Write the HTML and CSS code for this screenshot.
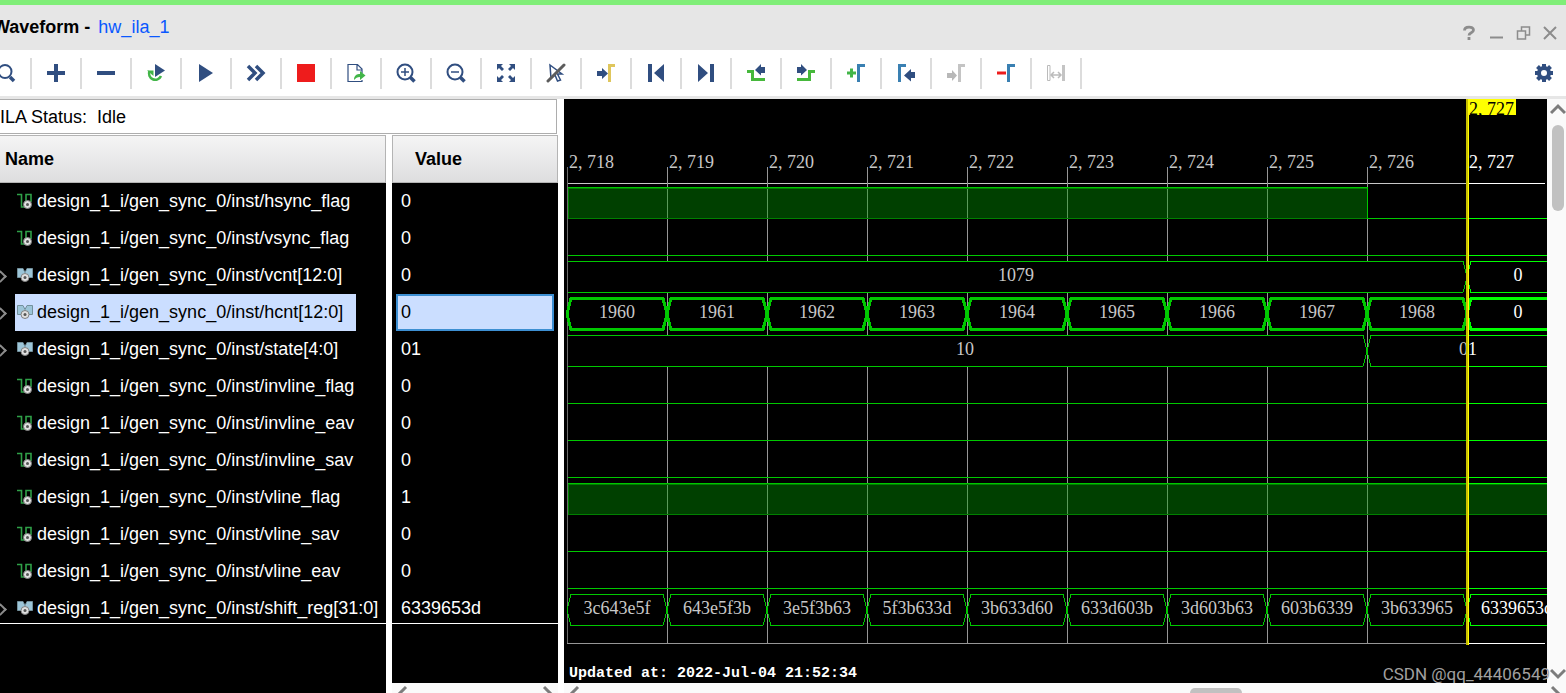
FILE: index.html
```html
<!DOCTYPE html>
<html lang="en">
<head>
<meta charset="utf-8">
<title>Waveform - hw_ila_1</title>
<link rel="stylesheet" href="styles.css">
</head>
<body>
<svg class="defs" aria-hidden="true">
  <symbol id="bit" viewBox="0 0 16 16"><path d="M0 1.500h4.500V14H9V1.500h5V9" fill="none" stroke="#2fa048" stroke-width="1.600"/><circle cx="10.500" cy="11.500" r="4" fill="#e0e0e0" stroke="#808080"/><circle cx="10.500" cy="11.500" r="1.500" fill="#555"/></symbol>
  <symbol id="bus" viewBox="0 0 16 16"><path d="M.5 1.500H6l2 4 2-4h5.500v9H12L8 8l-4 2.500H.5z" fill="#9cc5d8" stroke="#73909c"/><circle cx="8" cy="10.500" r="4" fill="#e0e0e0" stroke="#808080"/><circle cx="8" cy="10.500" r="1.500" fill="#555"/></symbol>
  <symbol id="hex" viewBox="0 0 100 34" overflow="visible"><path d="M0 16L4 .5H96L100 16L96 31.500H4Z"/></symbol>
</svg>

<header class="titlebar">
  <h1 class="title">Waveform - <a href="#">hw_ila_1</a></h1>
  <div class="window-buttons">
    <button aria-label="Help"><svg viewBox="0 0 16 16"><path d="M3.500 5.500C3.500 1 12.500 1 12.500 5c0 3-4.500 2.500-4.500 5.500M8 12v3" stroke-width="2.800"/></svg></button>
    <button aria-label="Minimize"><svg viewBox="0 0 16 16"><path d="M2 12.500h13" stroke-width="2"/></svg></button>
    <button aria-label="Restore"><svg viewBox="0 0 16 16"><path d="M6.500 6V2h8v8H10M2.500 6h8v8h-8z" stroke-width="1.500"/></svg></button>
    <button aria-label="Close"><svg viewBox="0 0 16 16"><path d="M2 2l12 12M14 2L2 14" stroke-width="2"/></svg></button>
  </div>
</header>

<nav class="toolbar">
  <div class="tools">
    <button aria-label="Search"><svg viewBox="0 0 20 20"><circle cx="9" cy="8.500" r="6.500" fill="none" stroke="#304e80" stroke-width="2"/><path d="M14 14l4 4" stroke="#304e80" stroke-width="3.500"/></svg></button>
    <button aria-label="Add"><svg viewBox="0 0 20 20"><path d="M10 1v18M1 10h18" stroke="#304e80" stroke-width="4"/></svg></button>
    <button aria-label="Remove"><svg viewBox="0 0 20 20"><path d="M1 10h18" stroke="#304e80" stroke-width="4"/></svg></button>
    <button aria-label="Run trigger continuously"><svg viewBox="0 0 20 20"><path d="M3.500 8A6 6 0 1 0 15 13" fill="none" stroke="#42b548" stroke-width="2.500"/><path d="M1 7.500h6.500V13z" fill="#42b548"/><path d="M9 1l10 6.500L9 14z" fill="#304e80"/></svg></button>
    <button aria-label="Run trigger"><svg viewBox="0 0 20 20"><path d="M3 1l14 9-14 9z" fill="#304e80"/></svg></button>
    <button aria-label="Run immediate"><svg viewBox="0 0 20 20"><path d="M2 3l7 7-7 7M10 3l7 7-7 7" fill="none" stroke="#304e80" stroke-width="3.500"/></svg></button>
    <button aria-label="Stop"><svg viewBox="0 0 20 20"><path d="M1 1h18v18H1z" fill="#ee1c1c"/></svg></button>
    <button aria-label="Export"><svg viewBox="0 0 20 20"><path d="M16 10V6l-4.500-4.500H2v17h14V17M11 2v5h5" fill="none" stroke="#304e80" stroke-width="1.200"/><path d="M8 17c0-5 3-6 6-6V8l5.500 4.500L14 17v-3c-3 0-4 1-6 3z" fill="#42b548"/></svg></button>
    <button aria-label="Zoom in"><svg viewBox="0 0 20 20"><circle cx="9" cy="9" r="7.500" fill="none" stroke="#304e80" stroke-width="2"/><path d="M5 9h8M9 5v8" stroke="#304e80" stroke-width="1.500"/><path d="M14.500 14.500l4 4" stroke="#304e80" stroke-width="3.500"/></svg></button>
    <button aria-label="Zoom out"><svg viewBox="0 0 20 20"><circle cx="9" cy="9" r="7.500" fill="none" stroke="#304e80" stroke-width="2"/><path d="M5 9h8" stroke="#304e80" stroke-width="1.500"/><path d="M14.500 14.500l4 4" stroke="#304e80" stroke-width="3.500"/></svg></button>
    <button aria-label="Zoom fit"><svg viewBox="0 0 20 20"><path d="M1 1h6L5 3l3 3-2 2-3-3-2 2zM19 1v6l-2-2-3 3-2-2 3-3-2-2zM1 19v-6l2 2 3-3 2 2-3 3 2 2zM19 19h-6l2-2-3-3 2-2 3 3 2-2z" fill="#304e80"/></svg></button>
    <button aria-label="Cursor off"><svg viewBox="0 0 20 20"><path d="M4 2l12 9h-4.500l3 6-3 1-2.500-6-4 3.500z" fill="#fff" stroke="#304e80" stroke-width="1.500"/><path d="M2 18L18 2" stroke="#5c5c5c" stroke-width="3" stroke-linecap="round"/></svg></button>
    <button aria-label="Go to cursor"><svg viewBox="0 0 20 20"><path d="M1 8h5V5l6 5.500L6 16v-3H1z" fill="#304e80"/><path d="M13.500 19V2.500H19" fill="none" stroke="#dfc65c" stroke-width="3"/></svg></button>
    <button aria-label="Go to start"><svg viewBox="0 0 20 20"><path d="M2 1h4v18H2zM18 1v18L8 10z" fill="#304e80"/></svg></button>
    <button aria-label="Go to end"><svg viewBox="0 0 20 20"><path d="M14 1h4v18h-4zM2 1v18l10-9z" fill="#304e80"/></svg></button>
    <button aria-label="Previous transition"><svg viewBox="0 0 20 20"><path d="M1 8.500h5.500v8H19" fill="none" stroke="#46b83c" stroke-width="3"/><path d="M19 4h-4V1L9 7l6 5.500V10h4z" fill="#304e80"/></svg></button>
    <button aria-label="Next transition"><svg viewBox="0 0 20 20"><path d="M1 16.500h12.500v-8H19" fill="none" stroke="#46b83c" stroke-width="3"/><path d="M1 4h4V1l6 6-6 5.500V10H1z" fill="#304e80"/></svg></button>
    <button aria-label="Add marker"><svg viewBox="0 0 20 20"><path d="M1 10h9M5.500 5.500v9" stroke="#42b548" stroke-width="3"/><path d="M12.500 19V2.500H19" fill="none" stroke="#3a80b2" stroke-width="3"/></svg></button>
    <button aria-label="Previous marker"><svg viewBox="0 0 20 20"><path d="M3.500 19V2.500H10" fill="none" stroke="#3a80b2" stroke-width="3"/><path d="M19 9h-4V6l-7 6.500 7 6V15h4z" fill="#304e80"/></svg></button>
    <button aria-label="Next marker" disabled><svg viewBox="0 0 20 20"><path d="M1 10h5V7l5 5.500L6 18v-3H1z" fill="#b8b8b8"/><path d="M13.500 19V2.500H19" fill="none" stroke="#c4c4c4" stroke-width="3"/></svg></button>
    <button aria-label="Delete marker"><svg viewBox="0 0 20 20"><path d="M1 10h9" stroke="#ee1c1c" stroke-width="3"/><path d="M12.500 19V2.500H19" fill="none" stroke="#3a80b2" stroke-width="3"/></svg></button>
    <button aria-label="Swap markers" disabled><svg viewBox="0 0 20 20"><path d="M4 2.500H1.500v15H4z" fill="none" stroke="#bbb"/><path d="M16 2h3v16h-3z" fill="#c4c4c4"/><path d="M5 12h10M8 9l-3 3 3 3M12 9l3 3-3 3" fill="none" stroke="#bbb" stroke-width="1.500"/></svg></button>
  </div>
  <button class="settings" aria-label="Settings"><svg viewBox="0 0 20 20"><circle cx="10" cy="10" r="5" fill="none" stroke="#304e80" stroke-width="4"/><path d="M10 1v3M10 16v3M1 10h3M16 10h3M3.500 3.500l2.500 2.500M14 14l2.500 2.500M3.500 16.500L6 14M14 6l2.500-2.500" stroke="#304e80" stroke-width="4"/></svg></button>
</nav>

<main class="workspace">
  <section class="signals">
    <div class="status">ILA Status:&nbsp; Idle</div>
    <div class="panes">
      <div class="pane name-pane">
        <table>
          <thead><tr><th>Name</th></tr></thead>
          <tbody>
            <tr><td><span class="signal"><svg><use href="#bit"/></svg>design_1_i/gen_sync_0/inst/hsync_flag</span></td></tr>
            <tr><td><span class="signal"><svg><use href="#bit"/></svg>design_1_i/gen_sync_0/inst/vsync_flag</span></td></tr>
            <tr class="group"><td><span class="signal"><svg><use href="#bus"/></svg>design_1_i/gen_sync_0/inst/vcnt[12:0]</span></td></tr>
            <tr class="group selected"><td><span class="signal"><svg><use href="#bus"/></svg>design_1_i/gen_sync_0/inst/hcnt[12:0]</span></td></tr>
            <tr class="group"><td><span class="signal"><svg><use href="#bus"/></svg>design_1_i/gen_sync_0/inst/state[4:0]</span></td></tr>
            <tr><td><span class="signal"><svg><use href="#bit"/></svg>design_1_i/gen_sync_0/inst/invline_flag</span></td></tr>
            <tr><td><span class="signal"><svg><use href="#bit"/></svg>design_1_i/gen_sync_0/inst/invline_eav</span></td></tr>
            <tr><td><span class="signal"><svg><use href="#bit"/></svg>design_1_i/gen_sync_0/inst/invline_sav</span></td></tr>
            <tr><td><span class="signal"><svg><use href="#bit"/></svg>design_1_i/gen_sync_0/inst/vline_flag</span></td></tr>
            <tr><td><span class="signal"><svg><use href="#bit"/></svg>design_1_i/gen_sync_0/inst/vline_sav</span></td></tr>
            <tr><td><span class="signal"><svg><use href="#bit"/></svg>design_1_i/gen_sync_0/inst/vline_eav</span></td></tr>
            <tr class="group last"><td><span class="signal"><svg><use href="#bus"/></svg>design_1_i/gen_sync_0/inst/shift_reg[31:0]</span></td></tr>
          </tbody>
        </table>
      </div>
      <div class="pane value-pane">
        <table>
          <thead><tr><th>Value</th></tr></thead>
          <tbody>
            <tr><td><span class="value">0</span></td></tr>
            <tr><td><span class="value">0</span></td></tr>
            <tr><td><span class="value">0</span></td></tr>
            <tr class="selected"><td><span class="value">0</span></td></tr>
            <tr><td><span class="value">01</span></td></tr>
            <tr><td><span class="value">0</span></td></tr>
            <tr><td><span class="value">0</span></td></tr>
            <tr><td><span class="value">0</span></td></tr>
            <tr><td><span class="value">1</span></td></tr>
            <tr><td><span class="value">0</span></td></tr>
            <tr><td><span class="value">0</span></td></tr>
            <tr class="last"><td><span class="value">6339653d</span></td></tr>
          </tbody>
        </table>
        <div class="hscroll">
          <svg class="arrow" viewBox="0 0 16 10"><path d="M14 2L4 12"/></svg>
          <svg class="arrow" viewBox="0 0 16 10"><path d="M2 2l10 10"/></svg>
        </div>
      </div>
    </div>
  </section>

  <section class="viewer">
    <div class="viewer-row">
      <svg class="wave" role="img" aria-label="Waveform">
        <!-- time grid -->
        <path class="axis" d="M3 84.500H903"/>
        <path class="grid" d="M103.500 68V544M203.500 68V544M303.500 68V544M403.500 68V544M503.500 68V544M603.500 68V544M703.500 68V544M803.500 68V544M3 544.500H903"/>
        <path class="grid dim" d="M3.500 68V544"/>
        <path class="axis now" d="M903 84.500H981M903 544.500H981"/>
        <g class="ticks">
          <text x="5" y="69">2, 718</text><text x="105" y="69">2, 719</text><text x="205" y="69">2, 720</text><text x="305" y="69">2, 721</text><text x="405" y="69">2, 722</text><text x="505" y="69">2, 723</text><text x="605" y="69">2, 724</text><text x="705" y="69">2, 725</text><text x="805" y="69">2, 726</text><text class="now" x="905" y="69">2, 727</text>
        </g>
        <!-- single-bit signals -->
        <rect class="high" x="4" y="88" width="799" height="31"/>
        <path class="edge" d="M4 119.500H803M4.500 88V119M4 89.500H803"/>
        <path class="line" d="M4 88.500H803.500V119.500H903M4 156.500H903M4 304.500H903M4 341.500H903M4 378.500H903M4 452.500H903M4 489.500H903"/>
        <path class="line now" d="M903 119.500H983M903 156.500H983M903 304.500H983M903 341.500H983M903 378.500H983M903 452.500H983M903 489.500H983"/>
        <rect class="high" x="4" y="384" width="979" height="31"/>
        <path class="edge" d="M4 415.500H983M4.500 384V415M4 385.500H983"/>
        <path class="line" d="M4 384.500H903"/><path class="line now" d="M903 384.500H983"/>
        <!-- buses -->
        <path class="bus" d="M4 162.500H899L903 178L899 193.500H4"/>
        <path class="bus now" d="M990 162.500H907L903 178L907 193.500H990"/>
        <path class="bus" d="M4 236.500H799L803 252L799 267.500H4"/>
        <path class="bus" d="M903 236.500H807L803 252L807 267.500H903"/>
        <path class="bus now" d="M903 236.500H983M903 267.500H983"/>
        <g class="bus thick">
          <use href="#hex" x="3" y="199" width="100" height="34"/><use href="#hex" x="103" y="199" width="100" height="34"/><use href="#hex" x="203" y="199" width="100" height="34"/><use href="#hex" x="303" y="199" width="100" height="34"/><use href="#hex" x="403" y="199" width="100" height="34"/><use href="#hex" x="503" y="199" width="100" height="34"/><use href="#hex" x="603" y="199" width="100" height="34"/><use href="#hex" x="703" y="199" width="100" height="34"/><use href="#hex" x="803" y="199" width="100" height="34"/>
          <use class="now" href="#hex" x="903" y="199" width="100" height="34"/>
        </g>
        <g class="bus">
          <use href="#hex" x="3" y="495" width="100" height="34"/><use href="#hex" x="103" y="495" width="100" height="34"/><use href="#hex" x="203" y="495" width="100" height="34"/><use href="#hex" x="303" y="495" width="100" height="34"/><use href="#hex" x="403" y="495" width="100" height="34"/><use href="#hex" x="503" y="495" width="100" height="34"/><use href="#hex" x="603" y="495" width="100" height="34"/><use href="#hex" x="703" y="495" width="100" height="34"/><use href="#hex" x="803" y="495" width="100" height="34"/>
          <use class="now" href="#hex" x="903" y="495" width="100" height="34"/>
        </g>
        <g class="values">
          <text x="452" y="182">1079</text><text class="now" x="954" y="182">0</text>
          <text x="53" y="219">1960</text><text x="153" y="219">1961</text><text x="253" y="219">1962</text><text x="353" y="219">1963</text><text x="453" y="219">1964</text><text x="553" y="219">1965</text><text x="653" y="219">1966</text><text x="753" y="219">1967</text><text x="853" y="219">1968</text><text class="now" x="954" y="219">0</text>
          <text x="401" y="256">10</text><text x="904" y="256">0<tspan class="now">1</tspan></text>
          <text x="53" y="515">3c643e5f</text><text x="153" y="515">643e5f3b</text><text x="253" y="515">3e5f3b63</text><text x="353" y="515">5f3b633d</text><text x="453" y="515">3b633d60</text><text x="553" y="515">633d603b</text><text x="653" y="515">3d603b63</text><text x="753" y="515">603b6339</text><text x="853" y="515">3b633965</text><text class="now" x="953" y="515">6339653d</text>
        </g>
        <!-- cursor -->
        <path d="M902 0h2v546h-2z" fill="#c8be00"/><path d="M904 0h1v546h-1z" fill="#ff0"/>
        <svg x="904" y="0" width="48" height="16"><rect width="48" height="16" fill="#ff0"/><text class="cursor-time" x="1" y="16">2, 727</text></svg>
        <text class="updated" x="5" y="578">Updated at: 2022-Jul-04 21:52:34</text>
      </svg>
      <div class="vscroll">
        <svg class="arrow" viewBox="0 0 16 12"><path d="M1 10l7-7 7 7"/></svg>
        <div class="vthumb"></div>
        <svg class="arrow" viewBox="0 0 16 12"><path d="M1 2l7 7 7-7"/></svg>
      </div>
    </div>
    <div class="hscroll">
      <svg class="arrow" viewBox="0 0 16 10"><path d="M14 2L4 12"/></svg>
      <div class="hthumb"></div>
      <svg class="arrow" viewBox="0 0 16 10"><path d="M2 2l10 10"/></svg>
    </div>
    <div class="watermark">CSDN @qq_44406549</div>
  </section>
</main>
</body>
</html>
```
FILE: styles.css
```css
* { box-sizing: border-box; }
body {
  margin: 0;
  height: 100vh;
  display: flex;
  flex-direction: column;
  overflow: hidden;
  background: #fff;
  color: #000;
  font: 18px/20px "Liberation Sans", Arial, sans-serif;
}
button { border: 0; padding: 0; margin: 0; background: none; }
svg { display: block; }
.defs { position: absolute; width: 0; height: 0; }

.titlebar {
  height: 50px;
  flex: none;
  display: flex;
  justify-content: space-between;
  align-items: center;
  border-top: 5px solid #80ee78;
  background: #e6e6e6;
}
.title { margin: 0 0 0 -7px; padding-bottom: 2px; font-size: 18px; white-space: pre; }
.title a { margin-left: 3px; color: #0a58ff; font-weight: normal; text-decoration: none; }
.window-buttons { display: flex; gap: 11px; padding: 10px 8px 0 0; }
.window-buttons svg { width: 16px; height: 16px; fill: none; stroke: #8c8c8c; }

.toolbar {
  height: 49px;
  flex: none;
  display: flex;
  justify-content: space-between;
  align-items: center;
  border-bottom: 3px solid #e6e6e6;
}
.tools { display: flex; margin-left: -18px; }
.tools button {
  width: 50px;
  height: 31px;
  display: flex;
  align-items: center;
  justify-content: center;
  border-right: 2px solid #dcdcdc;
}
.toolbar svg { width: 20px; height: 20px; }
.settings { padding-right: 12px; }

.workspace { flex: 1; display: flex; min-height: 0; }
.signals { width: 558px; flex: none; display: flex; flex-direction: column; }
.status {
  height: 35px;
  margin-right: 1px;
  border: 1px solid #adadad;
  border-left: 0;
  line-height: 34px;
  white-space: pre;
}
.panes { flex: 1; display: flex; gap: 6px; padding-top: 1px; min-height: 0; }
.pane { background: #000; color: #fff; display: flex; flex-direction: column; min-height: 0; }
.name-pane { width: 386px; }
.value-pane { flex: 1; justify-content: space-between; }
table { width: 100%; border-collapse: separate; border-spacing: 0; }
th {
  height: 48px;
  padding: 0 0 0 5px;
  border: 1px solid #b4b4b4;
  border-left: 0;
  background: linear-gradient(#f5f5f5, #dededf);
  color: #000;
  text-align: left;
}
.value-pane th { padding-left: 22px; border-left: 1px solid #b4b4b4; }
td { height: 37px; padding: 0; white-space: nowrap; }
.name-pane td { padding-left: 15px; }
.value-pane td { padding: 0 4px; }
.signal { display: inline-flex; align-items: center; gap: 4px; height: 37px; padding: 0 13px 2px 2px; vertical-align: top; }
.signal svg { width: 16px; height: 16px; }
.value { display: block; height: 37px; line-height: 37px; padding-left: 5px; }
.selected .signal { background: #cbdeff; color: #000; }
.selected .value { background: #cbdeff; color: #000; border: 2px solid #3d8fd2; line-height: 33px; padding-left: 3px; }
.last td { height: 34px; border-bottom: 1px solid #fff; }
.last .signal, .last .value { height: 33px; padding-top: 3px; padding-right: 0; line-height: 30px; }
.last .signal { padding-bottom: 0; }
.group td::before {
  content: "";
  float: left;
  width: 7px;
  height: 7px;
  margin: 15px 0 0 -19px;
  border: solid #8c8c8c;
  border-width: 2px 2px 0 0;
  transform: rotate(45deg);
}

.viewer { flex: 1; min-width: 0; margin-left: 6px; display: flex; flex-direction: column; position: relative; }
.viewer-row { flex: 1; display: flex; min-height: 0; }
.wave { flex: 1; min-width: 0; height: 100%; background: #000; overflow: hidden; shape-rendering: crispEdges; }
.vscroll {
  width: 19px;
  display: flex;
  flex-direction: column;
  align-items: center;
  padding: 4px 0 3px 2px;
  background: #fafafa;
}
.vscroll .arrow { width: 16px; height: 12px; }
.vthumb { width: 12px; height: 86px; margin: 10px 0 auto; border-radius: 6px; background: #c1c1c1; }
.arrow { fill: none; stroke: #7c7c7c; stroke-width: 3; }
.hscroll { height: 10px; flex: none; display: flex; justify-content: space-between; background: #fafafa; }
.hscroll .arrow { width: 16px; height: 10px; margin-top: 2px; }
.hthumb { width: 52px; height: 5px; margin: 5px 0 0 auto; border-radius: 6px 6px 0 0; background: #c1c1c1; }
.hthumb + .arrow { margin-left: 308px; }
.watermark {
  position: absolute;
  right: 16px;
  bottom: 9px;
  color: #a0a0a0;
  font-family: Roboto, sans-serif;
  font-size: 17px;
}

.axis, .grid, .line, .edge { fill: none; stroke-width: 1; }
.axis { stroke: #c8c8c8; }
.axis.now { stroke: #fff; }
.grid { stroke: #969696; }
.grid.dim { stroke: #6c6c6c; }
.line { stroke: #00c800; }
.edge { stroke: #008000; }
.high { fill: #00a000; fill-opacity: .4; }
.bus { fill: #000; stroke: #00c800; stroke-width: 1; }
.thick { stroke-width: 3; }
.line.now, .bus.now, .bus .now { stroke: #0f0; }
.wave text { fill: #c8c8c8; font: 18px "Liberation Serif", "Times New Roman", serif; }
.values text { text-anchor: middle; }
.wave text.now, .wave tspan.now { fill: #fff; }
.wave text.cursor-time { fill: #000; }
.wave text.updated { fill: #fff; font: bold 15px "Liberation Mono", "Courier New", monospace; }
```
